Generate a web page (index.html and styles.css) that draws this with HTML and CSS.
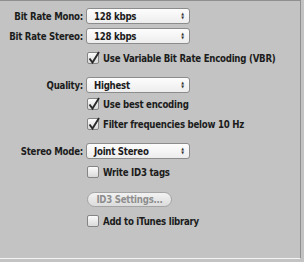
FILE: index.html
```html
<!DOCTYPE html>
<html lang="en">
<head>
    <meta charset="UTF-8">
    <title>MP3 Encoder</title>
    <link rel="stylesheet" href="styles.css">
</head>
<body>
    <div class="panel">
        <div class="row">
            <span class="label">Bit Rate Mono:</span>
            <div class="popup"><span>128 kbps</span><span class="arrows">&#9650;<br>&#9660;</span></div>
        </div>
        <div class="row mt4">
            <span class="label">Bit Rate Stereo:</span>
            <div class="popup"><span>128 kbps</span><span class="arrows">&#9650;<br>&#9660;</span></div>
        </div>
        <div class="check-row mt8">
            <span class="box"><svg class="tick" viewBox="0 0 14 14" width="14" height="14"><path d="M2.5 7.5 L5.5 11.5 L12 1"/></svg></span>
            <span>Use Variable Bit Rate Encoding (VBR)</span>
        </div>

        <div class="row mt13">
            <span class="label">Quality:</span>
            <div class="popup"><span>Highest</span><span class="arrows">&#9650;<br>&#9660;</span></div>
        </div>
        <div class="check-row mt5">
            <span class="box"><svg class="tick" viewBox="0 0 14 14" width="14" height="14"><path d="M2.5 7.5 L5.5 11.5 L12 1"/></svg></span>
            <span>Use best encoding</span>
        </div>
        <div class="check-row mt8">
            <span class="box"><svg class="tick" viewBox="0 0 14 14" width="14" height="14"><path d="M2.5 7.5 L5.5 11.5 L12 1"/></svg></span>
            <span>Filter frequencies below 10 Hz</span>
        </div>

        <div class="row mt13">
            <span class="label">Stereo Mode:</span>
            <div class="popup"><span>Joint Stereo</span><span class="arrows">&#9650;<br>&#9660;</span></div>
        </div>
        <div class="check-row mt7">
            <span class="box"></span>
            <span>Write ID3 tags</span>
        </div>

        <div class="btn-row mt14">
            <button class="btn" disabled>ID3 Settings...</button>
        </div>
        <div class="check-row mt8">
            <span class="box"></span>
            <span>Add to iTunes library</span>
        </div>
    </div>
</body>
</html>
```

FILE: styles.css
```css
body {
    margin: 0;
    background-color: #c2c3c2;
    font-family: "DejaVu Sans Condensed", "DejaVu Sans", sans-serif;
    font-size: 9.6px;
    letter-spacing: -0.25px;
    font-weight: bold;
    color: #1c1c1c;
    white-space: nowrap;
}
.panel {
    width: 301px;
    height: 259px;
    box-sizing: border-box;
    display: flex;
    flex-direction: column;
    padding-top: 7px;
    background-color: #c2c3c2;
    border-top: 1px solid #8e8f8e;
    border-right: 1px solid #8e8f8e;
    border-bottom: 1px solid #f4f4f4;
}
.mt4 { margin-top: 4px; }
.mt5 { margin-top: 5px; }
.mt7 { margin-top: 7px; }
.mt8 { margin-top: 8px; }
.mt13 { margin-top: 13px; }
.mt14 { margin-top: 14px; }

.row {
    display: flex;
    align-items: center;
    height: 16px;
}
.label {
    width: 86px;
    flex: none;
    text-align: right;
    padding-right: 3px;
    box-sizing: border-box;
}
.popup {
    width: 104px;
    height: 16px;
    box-sizing: border-box;
    display: flex;
    justify-content: space-between;
    align-items: center;
    padding: 0 5px 0 7px;
    border: 1px solid #8c8c8c;
    border-radius: 3px;
    background: linear-gradient(#fdfdfd, #ededed);
}
.arrows {
    font-size: 4px;
    line-height: 4px;
    letter-spacing: 0;
    color: #333;
    text-align: center;
}
.check-row {
    display: flex;
    align-items: center;
    height: 12px;
    padding-left: 87px;
}
.box {
    width: 12px;
    height: 12px;
    flex: none;
    box-sizing: border-box;
    margin-right: 4px;
    border: 1px solid #858585;
    border-radius: 2px;
    background: linear-gradient(#fbfbfb, #dadada);
    position: relative;
}
.tick {
    position: absolute;
    left: -1px;
    top: -2px;
    fill: none;
    stroke: #2a2a2a;
    stroke-width: 1.9;
}
.btn-row {
    display: flex;
    padding-left: 87px;
}
.btn {
    width: 85px;
    height: 15px;
    padding: 0;
    font-family: "DejaVu Sans Condensed", "DejaVu Sans", sans-serif;
    font-size: 9.6px;
    letter-spacing: -0.25px;
    font-weight: bold;
    color: #8e8e8e;
    border: 1px solid #a4a4a4;
    border-radius: 8px;
    background: linear-gradient(#f2f2f2, #dcdcdc);
}
```
